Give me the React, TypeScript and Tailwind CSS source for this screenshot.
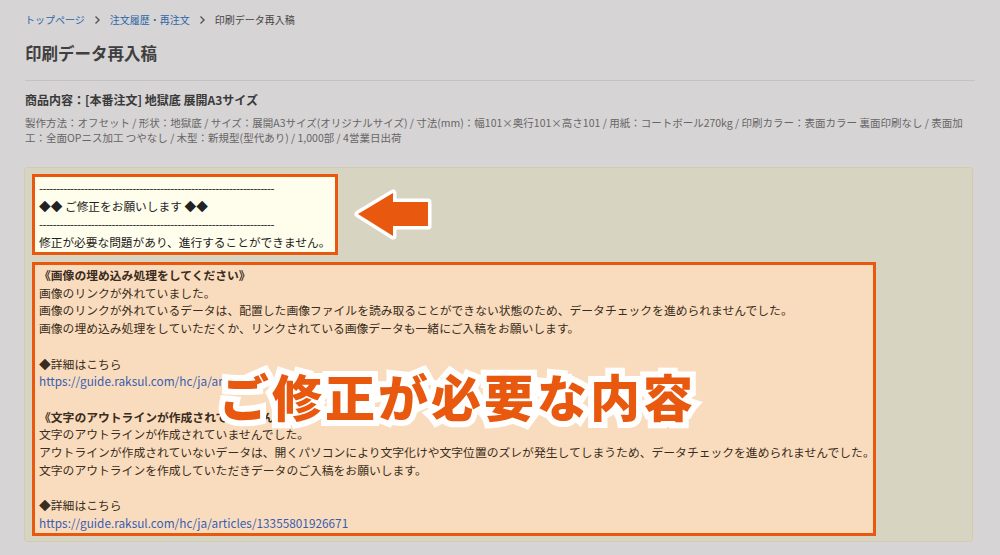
import React from 'react';

const FONT = { fontFamily: '"Noto Sans CJK JP", "Noto Sans", sans-serif' };
const DASHES = '-'.repeat(68);

function Chevron(): JSX.Element {
  return (
    <svg width="7" height="10" viewBox="0 0 7 10" className="mx-[9px]">
      <path d="M1.5 1.5 L5 5 L1.5 8.5" fill="none" stroke="#555" strokeWidth="1.4" />
    </svg>
  );
}

function ArrowMark(): JSX.Element {
  return (
    <svg
      width="100"
      height="70"
      viewBox="0 0 100 70"
      className="absolute left-[323px] top-[18px]"
    >
      <path
        d="M10 28 L45 7 L45 16 L80 16 L80 40 L45 40 L45 50 Z"
        fill="#e8590f"
        stroke="#fff"
        strokeWidth="7"
        strokeLinejoin="round"
        paintOrder="stroke"
      />
    </svg>
  );
}

function App(): JSX.Element {
  return (
    <div className="w-[1000px] h-[555px] bg-[#d6d4d5] overflow-hidden" style={FONT}>
      <div className="px-[25px] pt-[12px]">
        {/* Breadcrumb */}
        <nav className="flex items-center text-[10px] leading-[16px]">
          <span className="text-[#2b66a8]">トップページ</span>
          <Chevron />
          <span className="text-[#2b66a8]">注文履歴・再注文</span>
          <Chevron />
          <span className="text-[#444]">印刷データ再入稿</span>
        </nav>

        <h1 className="mt-[13px] text-[16.5px] leading-[24px] font-bold text-[#3f3f3f]">
          印刷データ再入稿
        </h1>
        <div className="mt-[15px] h-px w-[950px] bg-[#c4c2c3]" />

        {/* Product summary */}
        <p className="mt-[10px] text-[12px] leading-[18px] font-bold text-[#3a3a3a]">
          商品内容：[本番注文] 地獄底 展開A3サイズ
        </p>
        <div className="mt-[6px] text-[10.5px] leading-[15px] text-[#666] whitespace-nowrap">
          <div>
            製作方法：オフセット / 形状：地獄底 / サイズ：展開A3サイズ(オリジナルサイズ) / 寸法(mm)：幅101×奥行101×高さ101 / 用紙：コートボール270kg / 印刷カラー：表面カラー 裏面印刷なし / 表面加
          </div>
          <div>工：全面OPニス加工 つやなし / 木型：新規型(型代あり) / 1,000部 / 4営業日出荷</div>
        </div>
      </div>

      {/* Check result panel */}
      <div className="relative ml-[24px] mt-[22px] w-[949px] h-[375px] rounded-[3px] border border-[#d3cbb0] bg-[#d8d4c2] pl-[7px] pt-[6px]">
        <div className="w-[306px] border-[3px] border-[#e8590f] bg-[#fffdec] px-[4px] pt-[2px] pb-[1px] text-[11.7px] leading-[18px] text-[#222] whitespace-nowrap overflow-hidden">
          <div className="tracking-[-0.6px] overflow-hidden">{DASHES}</div>
          <div>◆◆ ご修正をお願いします ◆◆</div>
          <div className="tracking-[-0.6px] overflow-hidden">{DASHES}</div>
          <div>修正が必要な問題があり、進行することができません。</div>
        </div>

        <ArrowMark />

        <div className="relative mt-[7px] w-[844px] border-[3px] border-[#e8590f] bg-[#f9dcbd] px-[4px] py-[1px] text-[11.8px] leading-[17.7px] text-[#3a2c20] whitespace-nowrap">
          <div className="font-bold">《画像の埋め込み処理をしてください》</div>
          <div>画像のリンクが外れていました。</div>
          <div>画像のリンクが外れているデータは、配置した画像ファイルを読み取ることができない状態のため、データチェックを進められませんでした。</div>
          <div>画像の埋め込み処理をしていただくか、リンクされている画像データも一緒にご入稿をお願いします。</div>
          <div>&nbsp;</div>
          <div>◆詳細はこちら</div>
          <div className="text-[#3a5db0]">https://guide.raksul.com/hc/ja/articles/13355801926677</div>
          <div>&nbsp;</div>
          <div className="font-bold">《文字のアウトラインが作成されていません》</div>
          <div>文字のアウトラインが作成されていませんでした。</div>
          <div>アウトラインが作成されていないデータは、開くパソコンにより文字化けや文字位置のズレが発生してしまうため、データチェックを進められませんでした。</div>
          <div>文字のアウトラインを作成していただきデータのご入稿をお願いします。</div>
          <div>&nbsp;</div>
          <div>◆詳細はこちら</div>
          <div className="text-[#3a5db0]">https://guide.raksul.com/hc/ja/articles/13355801926671</div>

          <div className="absolute left-[184px] top-[100px] text-[50px] leading-[60px] font-black tracking-[3px] text-[#e8590f] [paint-order:stroke_fill] [-webkit-text-stroke:12px_#fff]">
            ご修正が必要な内容
          </div>
        </div>
      </div>
    </div>
  );
}

export default App;
